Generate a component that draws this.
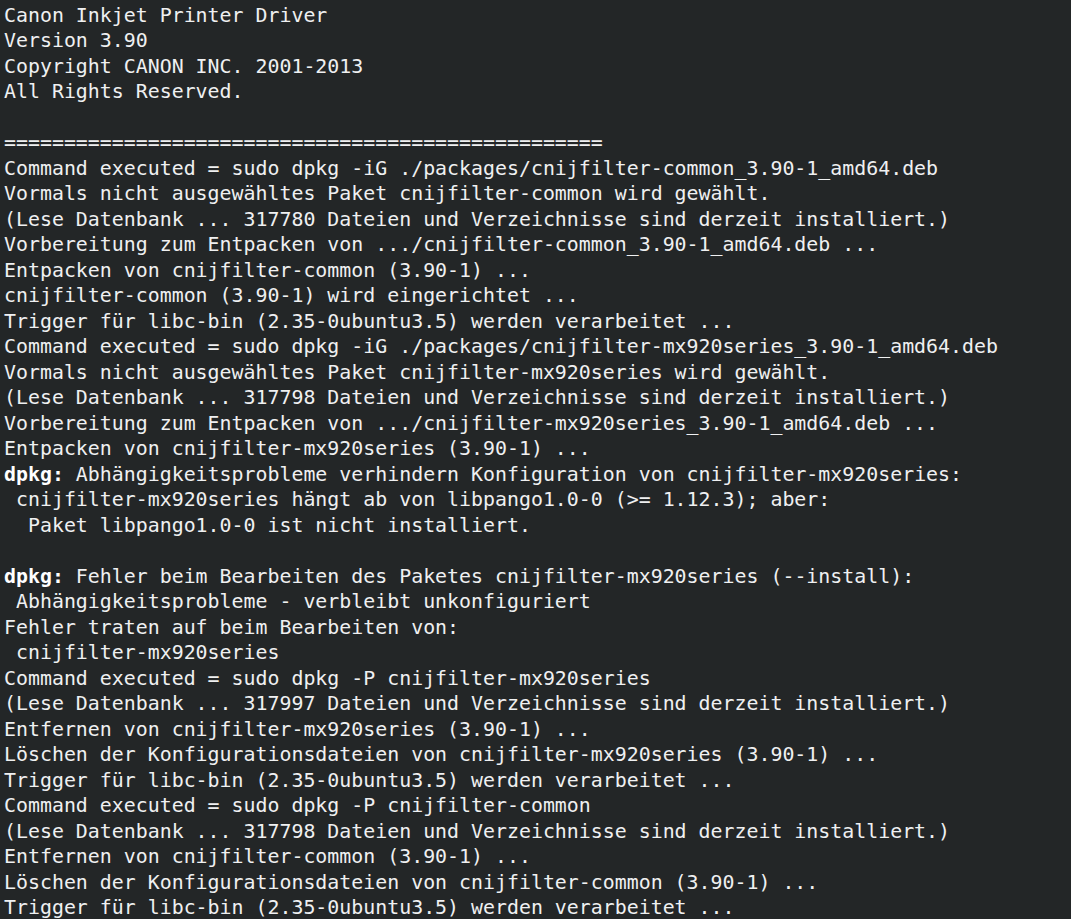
import React from "react";

type Line = { b?: string; t: string };

const lines: Line[] = [
  { t: "Canon Inkjet Printer Driver" },
  { t: "Version 3.90" },
  { t: "Copyright CANON INC. 2001-2013" },
  { t: "All Rights Reserved." },
  { t: "" },
  { t: "==================================================" },
  { t: "Command executed = sudo dpkg -iG ./packages/cnijfilter-common_3.90-1_amd64.deb" },
  { t: "Vormals nicht ausgewähltes Paket cnijfilter-common wird gewählt." },
  { t: "(Lese Datenbank ... 317780 Dateien und Verzeichnisse sind derzeit installiert.)" },
  { t: "Vorbereitung zum Entpacken von .../cnijfilter-common_3.90-1_amd64.deb ..." },
  { t: "Entpacken von cnijfilter-common (3.90-1) ..." },
  { t: "cnijfilter-common (3.90-1) wird eingerichtet ..." },
  { t: "Trigger für libc-bin (2.35-0ubuntu3.5) werden verarbeitet ..." },
  { t: "Command executed = sudo dpkg -iG ./packages/cnijfilter-mx920series_3.90-1_amd64.deb" },
  { t: "Vormals nicht ausgewähltes Paket cnijfilter-mx920series wird gewählt." },
  { t: "(Lese Datenbank ... 317798 Dateien und Verzeichnisse sind derzeit installiert.)" },
  { t: "Vorbereitung zum Entpacken von .../cnijfilter-mx920series_3.90-1_amd64.deb ..." },
  { t: "Entpacken von cnijfilter-mx920series (3.90-1) ..." },
  { b: "dpkg:", t: " Abhängigkeitsprobleme verhindern Konfiguration von cnijfilter-mx920series:" },
  { t: " cnijfilter-mx920series hängt ab von libpango1.0-0 (>= 1.12.3); aber:" },
  { t: "  Paket libpango1.0-0 ist nicht installiert." },
  { t: "" },
  { b: "dpkg:", t: " Fehler beim Bearbeiten des Paketes cnijfilter-mx920series (--install):" },
  { t: " Abhängigkeitsprobleme - verbleibt unkonfiguriert" },
  { t: "Fehler traten auf beim Bearbeiten von:" },
  { t: " cnijfilter-mx920series" },
  { t: "Command executed = sudo dpkg -P cnijfilter-mx920series" },
  { t: "(Lese Datenbank ... 317997 Dateien und Verzeichnisse sind derzeit installiert.)" },
  { t: "Entfernen von cnijfilter-mx920series (3.90-1) ..." },
  { t: "Löschen der Konfigurationsdateien von cnijfilter-mx920series (3.90-1) ..." },
  { t: "Trigger für libc-bin (2.35-0ubuntu3.5) werden verarbeitet ..." },
  { t: "Command executed = sudo dpkg -P cnijfilter-common" },
  { t: "(Lese Datenbank ... 317798 Dateien und Verzeichnisse sind derzeit installiert.)" },
  { t: "Entfernen von cnijfilter-common (3.90-1) ..." },
  { t: "Löschen der Konfigurationsdateien von cnijfilter-common (3.90-1) ..." },
  { t: "Trigger für libc-bin (2.35-0ubuntu3.5) werden verarbeitet ..." },
];

export default function App() {
  return (
    <div className="w-[1071px] h-[919px] overflow-hidden bg-[#232627] text-[#eff0f1] pl-[4px] pt-[2.5px] font-['DejaVu_Sans_Mono',monospace] text-[19.9px] leading-[25.5px]">
      {lines.map((l, i) => (
        <div key={i} className="whitespace-pre h-[25.5px]">
          {l.b && <span className="font-bold text-white">{l.b}</span>}
          {l.t}
        </div>
      ))}
    </div>
  );
}
